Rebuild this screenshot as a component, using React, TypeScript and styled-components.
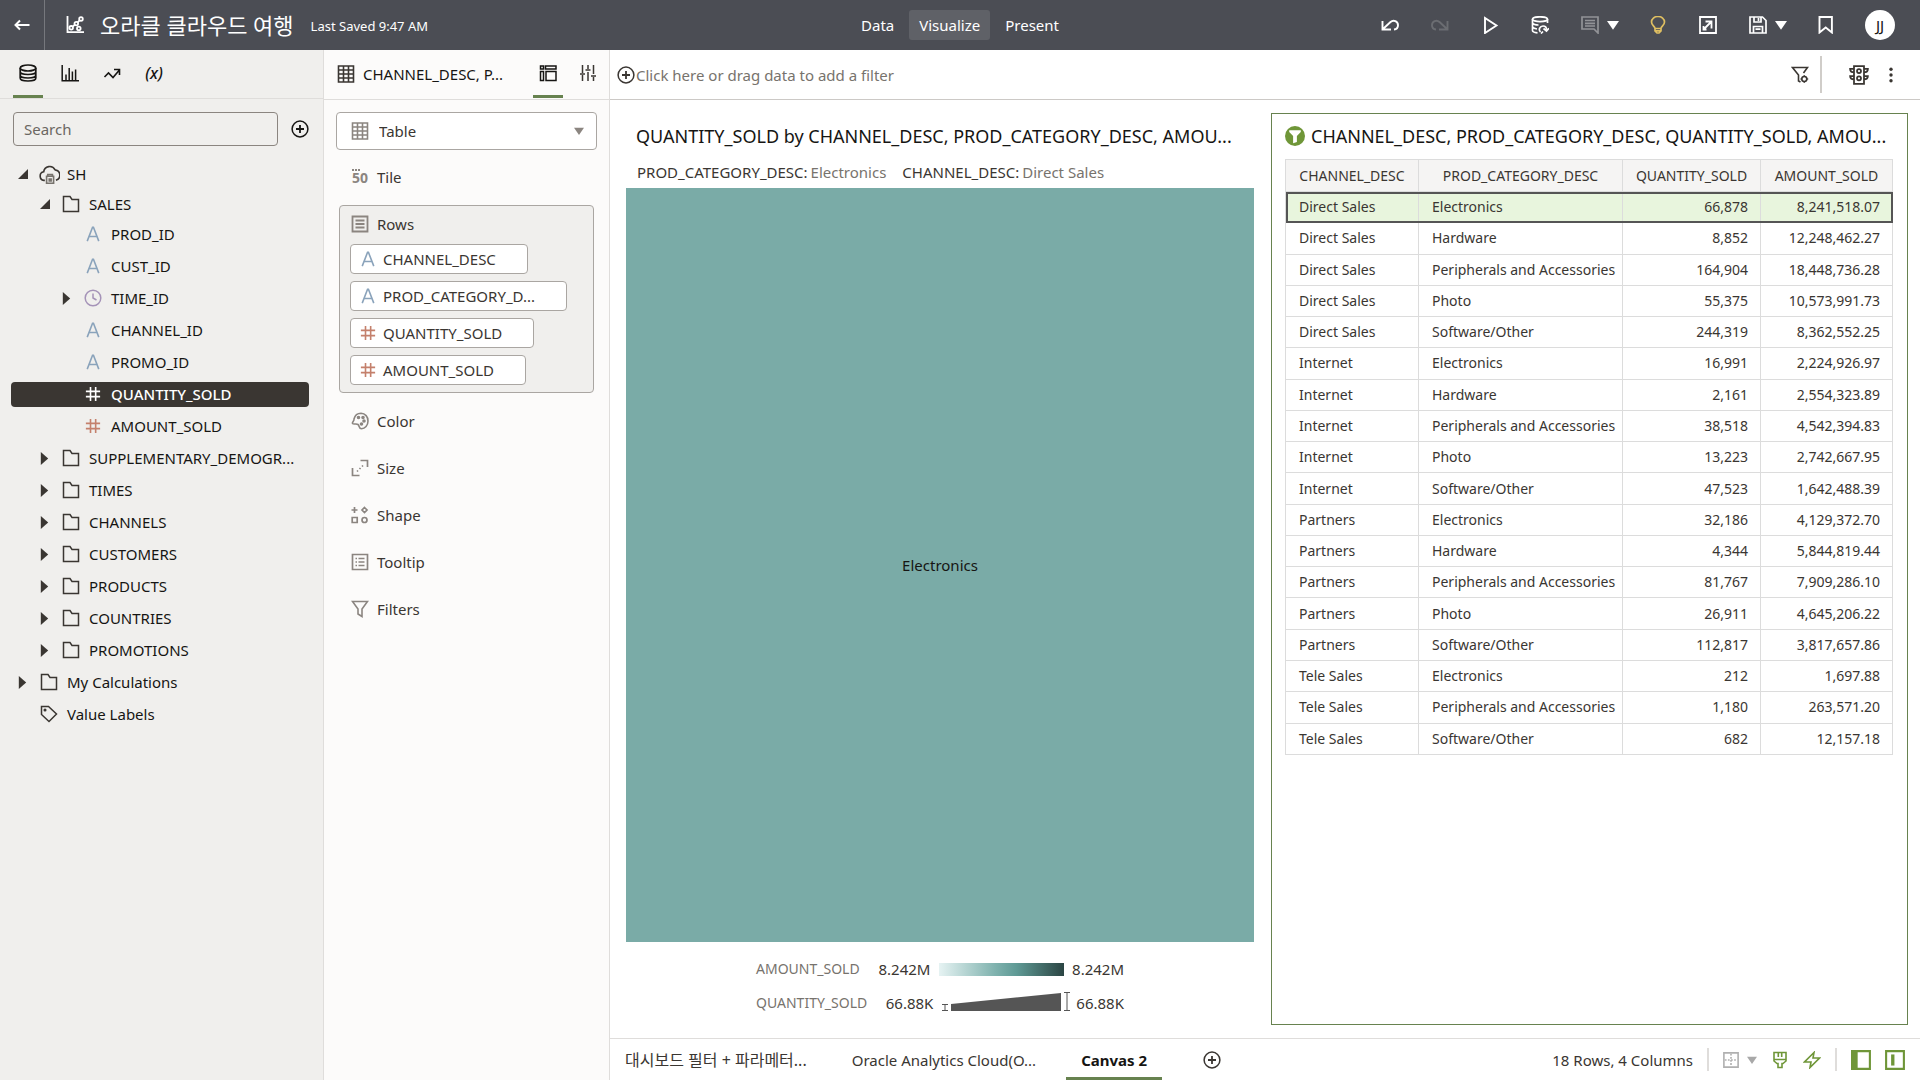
import React from "react";
import styled, { createGlobalStyle } from "styled-components";

const GlobalStyle = createGlobalStyle`
  *, *::before, *::after { box-sizing: border-box; }
  body {
    margin: 0;
    background: #fff;
    color: #161513;
    font: 15px/20px "Noto Sans", "Open Sans", "Noto Sans CJK KR", sans-serif;
  }
  button, input, select {
    font: inherit;
    color: inherit;
    margin: 0;
    padding: 0;
    border: 0;
    background: none;
  }
  button { cursor: pointer; }
  h1, h2, p, ul { margin: 0; padding: 0; font-weight: 400; list-style: none; }
`;

const green = "#67824f";
const bright = "#6f9638";
const muted = "#8b8580";
const ink = "#3a3632";

/* ---------- icons ---------- */

const Svg = styled.svg<{ $w?: number; $h?: number; $color?: string }>`
  display: block;
  flex: none;
  width: ${(p) => p.$w ?? 18}px;
  height: ${(p) => p.$h ?? p.$w ?? 18}px;
  color: ${(p) => p.$color ?? "inherit"};
  fill: none;
  stroke: currentColor;
  stroke-width: 1.5;
`;

const shapes: Record<string, React.ReactNode> = {
  back: <path d="M16.500 9H2M7 4.500 2.500 9 7 13.500" strokeWidth="2" />,
  project: (
    <g strokeWidth="1.800">
      <path d="M1.500 0v16.200H18" />
      <circle cx="5.200" cy="11.800" r="1.800" />
      <circle cx="10.300" cy="7.600" r="1.800" />
      <circle cx="12.800" cy="12.400" r="1.800" />
      <circle cx="15" cy="3" r="1.800" />
      <path d="m11.600 6.300 2-2M6.600 10.600l2.300-1.800" />
    </g>
  ),
  undo: <path d="M1.500 5v8.500H10M2 13l7.500-7C12.500 3.300 17 5.200 17 9.200c0 2.300-1.500 4-4 4.300" strokeWidth="1.900" />,
  redo: <path d="M16.500 5v8.500H8M16 13 8.500 6C5.500 3.300 1 5.200 1 9.200c0 2.300 1.500 4 4 4.300" strokeWidth="1.900" />,
  play: <path d="M4 2v15l11.500-7.500z" strokeWidth="1.900" />,
  refresh: (
    <g strokeWidth="1.700">
      <ellipse cx="9" cy="3.200" rx="7.500" ry="2.400" />
      <path d="M1.500 3v11.500c0 1 2 2 5 2.300M16.500 3v4M1.500 7c1 1.500 3 2 6 2M1.500 11c.8 1 2.500 1.700 4.500 2" />
      <path d="M9.500 16c-2.500-2.500-.5-6 2.500-6 2.200 0 3.500 1.500 3.500 3.500M12.500 12.500l3 2.500 2.500-2.800M12 15.500l-2 2" />
    </g>
  ),
  comment: <path d="M1 1h16v16l-4-4H1zM4 4.500h10M4 7.300h10M4 10h10" strokeWidth="1.700" />,
  bulb: (
    <path d="M6 12.500C6 10.500 2.500 9.500 2.500 6a6.500 5.500 0 0 1 13 0c0 3.500-3.500 4.500-3.500 6.500zM6 12.500v2.500l2 2h2l2-2v-2.500M6 14.800h6" strokeWidth="1.700" />
  ),
  exportIcon: <path d="M1 1h16v16H1zM4.500 13.500l7-7M6.500 5.500H12.500v7M4.500 10v3.500h3" strokeWidth="1.800" />,
  save: <path d="M1 1h12.500L17 4.500V17H1zM5 1v5h7V1M9.500 2v3M4.500 17v-6.500h9V17M6.500 13.200h5" strokeWidth="1.700" />,
  bookmark: <path d="M2.500 1h12.400v15.500L8.700 11.500l-6.200 5z" strokeWidth="1.900" />,
  database: (
    <g strokeWidth="1.700">
      <ellipse cx="9" cy="4" rx="7.800" ry="3" />
      <path d="M1.200 4v10c0 4 15.600 4 15.600 0V4M1.200 7.500c0 4 15.600 4 15.600 0M1.200 11c0 4 15.600 4 15.600 0" />
    </g>
  ),
  bars: <path d="M1.200 1v15.800H18M5 16V10.500M8.200 16V4M11.400 16V7.500M14.600 16V5.500" strokeWidth="1.500" />,
  trend: <path d="m1.500 13 4-4 4.500 4.500L16 6.500M11 5.500h5.500V11" strokeWidth="1.600" />,
  plus: (
    <g strokeWidth="1.500">
      <circle cx="9" cy="9" r="7.900" />
      <path d="M9 5v8M5 9h8" strokeWidth="1.800" />
    </g>
  ),
  grid: <path d="M1.500 1h15v16h-15zM6.500 1v16M11.500 1v16M1.500 5h15M1.500 9h15M1.500 13h15" strokeWidth="1.600" />,
  layout: <path d="M1.500 2h3v3h-3zM6.500 2h10.500v3H6.500zM1.500 7.500h3v9h-3zM7 7.500h10v9H7z" strokeWidth="1.500" />,
  sliders: <path d="M3.500 1v8M3.500 11v6M1 10h5M9 1v4M9 8v9M6.500 6h5M14.500 1v9M14.500 13v4M12 12h5" strokeWidth="1.500" />,
  cloud: (
    <g strokeWidth="1.400">
      <path d="M5 14H4.200A3.700 3.700 0 0 1 4 6.700 5.200 5.200 0 0 1 13.800 5 4.600 4.600 0 0 1 14.500 14" />
      <path d="M6.500 10.500h6v6h-6zM7.500 10.500V9h4v1.500M8.800 13h1.600v1.500H8.800z" stroke="#77736d" />
    </g>
  ),
  folder: <path d="M1.500 1.500H8l2 3h6.500v12h-15z" strokeWidth="1.500" />,
  attribute: <path d="M2.500 17 8.500 1.500h1L15.500 17M4.500 11.800h9" strokeWidth="1.800" />,
  measure: <path d="M6.200 1v16M12 1v16M1 6h16M1 12h16" strokeWidth="1.800" />,
  clock: (
    <g strokeWidth="1.500">
      <circle cx="9" cy="9" r="7.800" />
      <path d="M9 4.500V9l3.500 2" />
    </g>
  ),
  tag: (
    <g strokeWidth="1.500">
      <path d="M1.500 1.500h7l8 7.500-7.500 7.500-7.500-7z" />
      <circle cx="5" cy="5" r=".8" />
    </g>
  ),
  rows: <path d="M1.500 1.500h15v15h-15zM4.500 5.500h9M4.500 9h9M4.500 12.500h9" strokeWidth="1.800" />,
  tooltip: <path d="M1.500 1.500h15v15h-15zM4.500 5.500H6M7.500 5.500h6M4.500 9H6M7.500 9h6M4.500 12.500H6M7.500 12.500h6" strokeWidth="1.700" />,
  palette: (
    <g strokeWidth="1.600">
      <path d="M3 7C4 3 7 1.200 10 1.200a7.400 7.400 0 0 1 7 7.800c0 4.500-3 7.800-6.500 7.800-3 0-1.800-3-3.500-4.300C5 11 3 13 1.500 11.500.800 10 3.500 9 3 7z" />
      <circle cx="7.500" cy="5.500" r="1" fill="currentColor" />
      <circle cx="12" cy="5.500" r="1" fill="currentColor" />
      <circle cx="10.500" cy="12" r="1" fill="currentColor" />
      <circle cx="13" cy="9" r="1" fill="currentColor" />
    </g>
  ),
  size: <path d="M9.500 1.500h7V8M1.500 9v7.500h7M6 12.500l1-1M8.500 10l1-1M11 7.500l1-1" strokeWidth="1.700" />,
  shape: (
    <g strokeWidth="1.700">
      <path d="M3.500 1v6M.5 4h6M1.200 11.500h5v5h-5zM13.500 1.500 16 4l-2.500 2.500L11 4z" />
      <circle cx="13.500" cy="14" r="2.500" />
    </g>
  ),
  funnel: <path d="M1.500 1.500h15L11 9v7.500L7 14V9z" strokeWidth="1.600" />,
  funnelGear: (
    <g strokeWidth="1.600">
      <path d="M7.500 15.500V9L1.500 1.500h15L12.500 7M7.500 15l2 1" />
      <circle cx="13.300" cy="13" r="2.500" />
      <path d="M13.300 9.200v1M13.300 15.800v1M9.500 13h1M16.200 13h1" />
    </g>
  ),
  traffic: (
    <g strokeWidth="1.600">
      <path d="M4.500 1h9v16h-9zM4.500 3.500H1c0 2 1.500 3 3.500 3M4.500 10H1c0 2 1.500 3 3.500 3M13.500 3.500H17c0 2-1.500 3-3.500 3M13.500 10H17c0 2-1.500 3-3.500 3" />
      <circle cx="9" cy="5.500" r="1.800" />
      <circle cx="9" cy="12" r="1.800" />
    </g>
  ),
  kebab: (
    <g fill="currentColor" stroke="none">
      <circle cx="9" cy="2.500" r="1.900" />
      <circle cx="9" cy="9" r="1.900" />
      <circle cx="9" cy="15.500" r="1.900" />
    </g>
  ),
  filterBadge: (
    <g stroke="none">
      <circle cx="9" cy="9" r="9" fill={bright} />
      <path d="M3.800 3.800h10.400v1.500L10.700 9v5.500L7.300 15.500V9L3.800 5.300z" fill="#fff" />
    </g>
  ),
  caretDown: <path d="M0 3h18L9 16z" fill="currentColor" stroke="none" />,
  caretRight: <path d="M3 0v18l12-9z" fill="currentColor" stroke="none" />,
  caretOpen: <path d="M18 0v18H0z" fill="currentColor" stroke="none" />,
  dashedGrid: (
    <g strokeWidth="1.800">
      <path d="M1 1h16v16H1z" />
      <path d="M9 2v14M2 9h14" strokeDasharray="2 1.500" />
    </g>
  ),
  brush: <path d="M3 1.500h12v8.500L12 12.500H11v4H7v-4H6L3 10zM3 8.500h12M7.300 1.500V6M10.700 1.500V6" strokeWidth="1.600" />,
  bolt: <path d="M11 1.500 1.500 11H8l-1 5.500L16.500 7H10z" strokeWidth="1.600" />,
  leftPanel: (
    <g>
      <path d="M1 1h16v16H1z" strokeWidth="1.900" />
      <path d="M0 0h6v18H0z" fill="currentColor" stroke="none" />
    </g>
  ),
  innerPanel: (
    <g>
      <path d="M1 1h16v16H1z" strokeWidth="1.900" />
      <path d="M5.500 4h3v10h-3z" fill="currentColor" stroke="none" />
    </g>
  ),
};

function Icon({ name, w, h, color }: { name: string; w?: number; h?: number; color?: string }) {
  return (
    <Svg viewBox="0 0 18 18" $w={w} $h={h} $color={color} preserveAspectRatio="none" aria-hidden="true">
      {shapes[name]}
    </Svg>
  );
}

/* ---------- frame ---------- */

const Page = styled.div`
  display: grid;
  grid-template-rows: auto 1fr;
  min-height: 100vh;
`;

const Header = styled.header`
  display: grid;
  grid-template-columns: 1fr auto 1fr;
  align-items: center;
  height: 50px;
  background: #4b4d54;
  color: #fff;
`;

const HeaderStart = styled.div`
  display: flex;
  align-items: center;
  height: 50px;
`;

const BackButton = styled.button`
  display: grid;
  place-items: center;
  width: 45px;
  height: 50px;
  border-right: 1px solid #76787d;
  margin-right: 21px;
`;

const Title = styled.h1`
  margin: 0 17px 0 16px;
  font-size: 22px;
  line-height: 30px;
`;

const Saved = styled.span`
  padding-top: 2px;
  font-size: 13px;
  line-height: 20px;
`;

const Modes = styled.nav`
  display: flex;
  gap: 5px;
`;

const ModeButton = styled.button<{ $active?: boolean }>`
  height: 30px;
  padding: 0 10px;
  border-radius: 3px;
  background: ${(p) => (p.$active ? "#5f6167" : "transparent")};
`;

const HeaderEnd = styled.div`
  display: flex;
  justify-content: flex-end;
  align-items: center;
  padding-right: 25px;
`;

const ToolButton = styled.button`
  display: grid;
  place-items: center;
  width: 50px;
  height: 40px;
`;

const SplitButton = styled.button`
  display: flex;
  align-items: center;
  gap: 8px;
  width: 68px;
  height: 40px;
  padding-left: 16px;
`;

const Avatar = styled.button`
  width: 30px;
  height: 30px;
  margin-left: 14px;
  border-radius: 50%;
  background: #fff;
  color: #161513;
`;

const Body = styled.div`
  display: grid;
  grid-template-columns: 324px 286px minmax(0, 1fr);
`;

/* ---------- data panel ---------- */

const DataPanel = styled.aside`
  background: #f0efed;
  border-right: 1px solid #dfdddb;
`;

const PanelTabs = styled.div`
  display: flex;
  gap: 12px;
  height: 49px;
  padding-left: 13px;
  border-bottom: 1px solid #dfdddb;
`;

const PanelTab = styled.button<{ $active?: boolean }>`
  display: grid;
  place-items: center;
  width: 30px;
  height: 48px;
  border-bottom: 3px solid ${(p) => (p.$active ? green : "transparent")};
`;

const Formula = styled.em`
  font-size: 16px;
  line-height: 20px;
  font-weight: 500;
`;

const SearchRow = styled.div`
  display: flex;
  align-items: center;
  gap: 13px;
  padding: 13px 14px 13px 13px;
`;

const SearchInput = styled.input`
  flex: 1;
  min-width: 0;
  height: 34px;
  padding: 0 10px;
  border: 1px solid #8b8580;
  border-radius: 4px;
  &::placeholder { color: #6b6762; opacity: 1; }
`;

const IconButton = styled.button`
  display: grid;
  place-items: center;
  flex: none;
`;

const Tree = styled.ul`
  padding: 0 14px 0 11px;
`;

const TreeRow = styled.li`
  display: flex;
  align-items: center;
  height: 32px;
  &:nth-child(1) { height: 30px; }
  &:nth-child(2) { height: 29px; }
`;

const TreeItem = styled.button<{ $level: number; $selected?: boolean }>`
  display: flex;
  align-items: center;
  width: 100%;
  height: 25px;
  padding-left: ${(p) => p.$level * 22}px;
  border-radius: 4px;
  white-space: nowrap;
  background: ${(p) => (p.$selected ? ink : "transparent")};
  color: ${(p) => (p.$selected ? "#fff" : "#161513")};
  font-weight: ${(p) => (p.$selected ? 500 : 400)};
`;

const Slot = styled.span<{ $w: number; $color?: string }>`
  display: grid;
  place-items: center;
  flex: none;
  width: ${(p) => p.$w}px;
  color: ${(p) => p.$color ?? ink};
`;

const TreeLabel = styled.span`
  margin-left: 3px;
`;

type Node = [number, "open" | "closed" | "none", string, string, boolean?];

const tree: Node[] = [
  [0, "open", "cloud", "SH"],
  [1, "open", "folder", "SALES"],
  [2, "none", "attribute", "PROD_ID"],
  [2, "none", "attribute", "CUST_ID"],
  [2, "closed", "clock", "TIME_ID"],
  [2, "none", "attribute", "CHANNEL_ID"],
  [2, "none", "attribute", "PROMO_ID"],
  [2, "none", "measure", "QUANTITY_SOLD", true],
  [2, "none", "measure", "AMOUNT_SOLD"],
  [1, "closed", "folder", "SUPPLEMENTARY_DEMOGR..."],
  [1, "closed", "folder", "TIMES"],
  [1, "closed", "folder", "CHANNELS"],
  [1, "closed", "folder", "CUSTOMERS"],
  [1, "closed", "folder", "PRODUCTS"],
  [1, "closed", "folder", "COUNTRIES"],
  [1, "closed", "folder", "PROMOTIONS"],
  [0, "closed", "folder", "My Calculations"],
  [0, "none", "tag", "Value Labels"],
];

const iconColor: Record<string, string> = {
  attribute: "#8aa3bb",
  measure: "#c4806c",
  clock: "#a593b8",
};

const iconSize: Record<string, number> = { cloud: 21, attribute: 16, measure: 16 };

/* ---------- grammar panel ---------- */

const GrammarPanel = styled.aside`
  background: #fcfbfa;
  border-right: 1px solid #dfdddb;
`;

const GrammarHeader = styled.div`
  display: flex;
  align-items: center;
  height: 50px;
  padding: 0 6px 2px 13px;
  border-bottom: 1px solid #dfdddb;
`;

const GrammarTitle = styled.h2`
  flex: 1;
  margin-left: 8px;
  font-size: 15px;
  line-height: 20px;
  white-space: nowrap;
`;

const GrammarTab = styled(PanelTab)`
  align-self: flex-start;
  & + & { margin-left: 10px; }
`;

const TypeBox = styled.label`
  display: flex;
  align-items: center;
  height: 38px;
  margin: 12px 12px 0;
  padding: 0 12px 0 14px;
  border: 1px solid #aaa6a2;
  border-radius: 4px;
  background: #fff;
  color: ${ink};
`;

const TypeSelect = styled.select`
  flex: 1;
  height: 36px;
  padding-left: 10px;
  appearance: none;
  outline: none;
`;

const EdgeList = styled.div`
  display: flex;
  flex-direction: column;
`;

const Edge = styled.div<{ $tile?: boolean }>`
  display: flex;
  align-items: center;
  gap: 8px;
  height: ${(p) => (p.$tile ? 53 : 47)}px;
  padding-left: 27px;
  color: ${ink};
`;

const TileGlyph = styled.span`
  width: 18px;
  color: ${muted};
  font-size: 14px;
  line-height: 14px;
  font-weight: 700;
  text-align: center;
  &::before {
    content: "";
    display: block;
    width: 8px;
    margin-left: 1px;
    border-top: 2px dotted ${muted};
  }
`;

const RowsBox = styled.section`
  display: flex;
  flex-direction: column;
  align-items: flex-start;
  gap: 7px;
  margin: 2px 15px 4px;
  padding: 8px 10px 7px;
  border: 1px solid #aaa6a2;
  border-radius: 4px;
  background: #f0efed;
`;

const RowsTitle = styled.h2`
  display: flex;
  align-items: center;
  gap: 8px;
  height: 20px;
  margin-bottom: 3px;
  padding-left: 1px;
  font-size: 15px;
  line-height: 20px;
  color: ${ink};
`;

const Chip = styled.button`
  display: flex;
  align-items: center;
  gap: 7px;
  height: 30px;
  padding: 0 31px 0 9px;
  border: 1px solid #aaa6a2;
  border-radius: 4px;
  background: #fff;
  color: ${ink};
  white-space: nowrap;
`;

/* ---------- canvas ---------- */

const Main = styled.main`
  display: grid;
  grid-template-rows: 50px 1fr 42px;
`;

const FilterBar = styled.div`
  display: flex;
  align-items: center;
  border-bottom: 1px solid #ccc9c6;
  padding: 0 21px 0 7px;
  color: ${ink};
`;

const AddFilter = styled.button`
  display: flex;
  align-items: center;
  gap: 1px;
  margin-right: auto;
`;

const AddFilterText = styled.span`
  color: #77736d;
`;

const BarRule = styled.span`
  width: 2px;
  height: 37px;
  margin: 0 27px 0 11px;
  background: #d0cdc9;
`;

const KebabButton = styled(IconButton)`
  margin-left: 14px;
`;

const Canvas = styled.div`
  display: grid;
  grid-template-columns: minmax(0, 628fr) minmax(0, 637fr);
  gap: 17px;
  padding: 13px 12px 13px 16px;
`;

const Viz = styled.section<{ $selected?: boolean }>`
  display: flex;
  flex-direction: column;
  border: ${(p) => (p.$selected ? `1px solid ${green}` : "0")};
  padding: ${(p) => (p.$selected ? "10px 14px 10px 13px" : "11px 0 5px")};
`;

const VizTitle = styled.h2`
  display: flex;
  align-items: center;
  gap: 6px;
  font-size: 18px;
  line-height: 24px;
  white-space: nowrap;
`;

const TreemapHead = styled.div`
  padding: 0 10px;
`;

const Scope = styled.p`
  display: flex;
  gap: 16px;
  margin: 14px 0 6px 1px;
  color: ${ink};
`;

const ScopeValue = styled.span`
  margin-left: 3px;
  color: #77736d;
`;

const Treemap = styled.div`
  flex: 1;
  display: grid;
  place-items: center;
  background: #7aaba7;
`;

const Legend = styled.div`
  align-self: center;
  width: 368px;
  padding-top: 10px;
  font-size: 14px;
`;

const LegendRow = styled.div`
  display: flex;
  align-items: center;
  height: 34px;
`;

const LegendName = styled.span`
  width: 119px;
  color: #77736d;
`;

const LegendValue = styled.span<{ $w?: number; $gap?: number }>`
  width: ${(p) => (p.$w ? `${p.$w}px` : "auto")};
  margin: 0 ${(p) => (p.$w ? 9 : 0)}px 0 ${(p) => p.$gap ?? 0}px;
  text-align: right;
  color: ${ink};
  font-size: 15px;
`;

const Ramp = styled.span`
  width: 125px;
  height: 13px;
  background: linear-gradient(90deg, #e6f3f3, #7fb2ae 45%, #5f9a95 62%, #2b4543);
`;

const Grid = styled.table`
  width: 100%;
  height: 596px;
  margin-top: 11px;
  table-layout: fixed;
  border-collapse: collapse;
  border: 1px solid #dcdcdc;
  font-size: 14px;
  line-height: 20px;
  color: ${ink};
  white-space: nowrap;
`;

const Col = styled.col<{ $w?: number }>`
  width: ${(p) => (p.$w ? `${p.$w}px` : "auto")};
`;

const HeadCell = styled.th`
  height: 32px;
  padding: 0;
  border: 1px solid #dcdcdc;
  background: #f5f4f3;
  font-weight: 400;
  text-align: center;
`;

const DataRow = styled.tr<{ $selected?: boolean }>`
  background: ${(p) => (p.$selected ? "#e8f5dd" : "transparent")};
  outline: ${(p) => (p.$selected ? "2px solid #555" : "none")};
  outline-offset: -2px;
`;

const Cell = styled.td<{ $num?: boolean }>`
  padding: 0 12px 0 13px;
  border: 1px solid #dcdcdc;
  text-align: ${(p) => (p.$num ? "right" : "left")};
`;

const data: [string, string, string, string][] = [
  ["Direct Sales", "Electronics", "66,878", "8,241,518.07"],
  ["Direct Sales", "Hardware", "8,852", "12,248,462.27"],
  ["Direct Sales", "Peripherals and Accessories", "164,904", "18,448,736.28"],
  ["Direct Sales", "Photo", "55,375", "10,573,991.73"],
  ["Direct Sales", "Software/Other", "244,319", "8,362,552.25"],
  ["Internet", "Electronics", "16,991", "2,224,926.97"],
  ["Internet", "Hardware", "2,161", "2,554,323.89"],
  ["Internet", "Peripherals and Accessories", "38,518", "4,542,394.83"],
  ["Internet", "Photo", "13,223", "2,742,667.95"],
  ["Internet", "Software/Other", "47,523", "1,642,488.39"],
  ["Partners", "Electronics", "32,186", "4,129,372.70"],
  ["Partners", "Hardware", "4,344", "5,844,819.44"],
  ["Partners", "Peripherals and Accessories", "81,767", "7,909,286.10"],
  ["Partners", "Photo", "26,911", "4,645,206.22"],
  ["Partners", "Software/Other", "112,817", "3,817,657.86"],
  ["Tele Sales", "Electronics", "212", "1,697.88"],
  ["Tele Sales", "Peripherals and Accessories", "1,180", "263,571.20"],
  ["Tele Sales", "Software/Other", "682", "12,157.18"],
];

/* ---------- footer ---------- */

const Footer = styled.footer`
  display: flex;
  align-items: stretch;
  border-top: 1px solid #dfdddb;
  padding-right: 15px;
`;

const CanvasTab = styled.button<{ $active?: boolean; $large?: boolean }>`
  height: 41px;
  padding: 3px 15px 0;
  margin-right: 15px;
  border-bottom: 3px solid ${(p) => (p.$active ? green : "transparent")};
  font-size: ${(p) => (p.$large ? 16 : 15)}px;
  font-weight: ${(p) => (p.$active ? 700 : 400)};
  color: ${(p) => (p.$active ? "#161513" : ink)};
  white-space: nowrap;
`;

const AddCanvas = styled(IconButton)`
  margin: 0 auto 0 26px;
`;

const Status = styled.div`
  display: flex;
  align-items: center;
  gap: 14px;
  color: ${ink};
`;

const StatusRule = styled.span`
  width: 2px;
  height: 23px;
  background: #dfdddb;
`;

const StatusSplit = styled.button`
  display: flex;
  align-items: center;
  gap: 8px;
`;

export default function App() {
  return (
    <>
      <GlobalStyle />
      <Page>
        <Header>
          <HeaderStart>
            <BackButton aria-label="Back"><Icon name="back" /></BackButton>
            <Icon name="project" />
            <Title>오라클 클라우드 여행</Title>
            <Saved>Last Saved 9:47 AM</Saved>
          </HeaderStart>
          <Modes>
            <ModeButton>Data</ModeButton>
            <ModeButton $active>Visualize</ModeButton>
            <ModeButton>Present</ModeButton>
          </Modes>
          <HeaderEnd>
            <ToolButton aria-label="Undo"><Icon name="undo" /></ToolButton>
            <ToolButton aria-label="Redo"><Icon name="redo" color="#6b6d72" /></ToolButton>
            <ToolButton aria-label="Preview"><Icon name="play" /></ToolButton>
            <ToolButton aria-label="Refresh data"><Icon name="refresh" /></ToolButton>
            <SplitButton aria-label="Notes">
              <Icon name="comment" color="#929397" />
              <Icon name="caretDown" w={12} />
            </SplitButton>
            <ToolButton aria-label="Insights"><Icon name="bulb" color="#dfbf62" /></ToolButton>
            <ToolButton aria-label="Export"><Icon name="exportIcon" /></ToolButton>
            <SplitButton aria-label="Save">
              <Icon name="save" />
              <Icon name="caretDown" w={12} />
            </SplitButton>
            <ToolButton aria-label="Bookmark"><Icon name="bookmark" /></ToolButton>
            <Avatar>JJ</Avatar>
          </HeaderEnd>
        </Header>

        <Body>
          <DataPanel>
            <PanelTabs>
              <PanelTab $active aria-label="Data"><Icon name="database" /></PanelTab>
              <PanelTab aria-label="Visualizations"><Icon name="bars" /></PanelTab>
              <PanelTab aria-label="Analytics"><Icon name="trend" /></PanelTab>
              <PanelTab><Formula>(x)</Formula></PanelTab>
            </PanelTabs>
            <SearchRow>
              <SearchInput type="text" placeholder="Search" aria-label="Search" />
              <IconButton aria-label="Add data"><Icon name="plus" /></IconButton>
            </SearchRow>
            <Tree>
              {tree.map(([level, state, icon, label, selected]) => (
                <TreeRow key={label}>
                  <TreeItem $level={level} $selected={selected}>
                    <Slot $w={23}>
                      {state === "open" && <Icon name="caretOpen" w={10} />}
                      {state === "closed" && <Icon name="caretRight" w={11} h={13} />}
                    </Slot>
                    <Slot $w={30} $color={selected ? "#fff" : iconColor[icon]}>
                      <Icon name={icon} w={iconSize[icon]} />
                    </Slot>
                    <TreeLabel>{label}</TreeLabel>
                  </TreeItem>
                </TreeRow>
              ))}
            </Tree>
          </DataPanel>

          <GrammarPanel>
            <GrammarHeader>
              <Icon name="grid" color={ink} />
              <GrammarTitle>CHANNEL_DESC, P...</GrammarTitle>
              <GrammarTab $active aria-label="Grammar"><Icon name="layout" /></GrammarTab>
              <GrammarTab aria-label="Properties"><Icon name="sliders" color={ink} /></GrammarTab>
            </GrammarHeader>
            <TypeBox>
              <Icon name="grid" color={muted} />
              <TypeSelect aria-label="Visualization type" defaultValue="Table">
                <option>Table</option>
              </TypeSelect>
              <Icon name="caretDown" w={10} color={muted} />
            </TypeBox>
            <EdgeList>
              <Edge $tile><TileGlyph>50</TileGlyph>Tile</Edge>
              <RowsBox>
                <RowsTitle><Icon name="rows" color={muted} />Rows</RowsTitle>
                <Chip><Icon name="attribute" w={16} color={iconColor.attribute} />CHANNEL_DESC</Chip>
                <Chip><Icon name="attribute" w={16} color={iconColor.attribute} />PROD_CATEGORY_D...</Chip>
                <Chip><Icon name="measure" w={16} color={iconColor.measure} />QUANTITY_SOLD</Chip>
                <Chip><Icon name="measure" w={16} color={iconColor.measure} />AMOUNT_SOLD</Chip>
              </RowsBox>
              <Edge><Icon name="palette" color={muted} />Color</Edge>
              <Edge><Icon name="size" color={muted} />Size</Edge>
              <Edge><Icon name="shape" color={muted} />Shape</Edge>
              <Edge><Icon name="tooltip" color={muted} />Tooltip</Edge>
              <Edge><Icon name="funnel" color={muted} />Filters</Edge>
            </EdgeList>
          </GrammarPanel>

          <Main>
            <FilterBar>
              <AddFilter>
                <Icon name="plus" />
                <AddFilterText>Click here or drag data to add a filter</AddFilterText>
              </AddFilter>
              <IconButton aria-label="Filter settings"><Icon name="funnelGear" /></IconButton>
              <BarRule />
              <IconButton aria-label="Auto apply"><Icon name="traffic" w={20} /></IconButton>
              <KebabButton aria-label="More"><Icon name="kebab" w={16} /></KebabButton>
            </FilterBar>

            <Canvas>
              <Viz>
                <TreemapHead>
                  <VizTitle>QUANTITY_SOLD by CHANNEL_DESC, PROD_CATEGORY_DESC, AMOU...</VizTitle>
                  <Scope>
                    <span>PROD_CATEGORY_DESC:<ScopeValue>Electronics</ScopeValue></span>
                    <span>CHANNEL_DESC:<ScopeValue>Direct Sales</ScopeValue></span>
                  </Scope>
                </TreemapHead>
                <Treemap>Electronics</Treemap>
                <Legend>
                  <LegendRow>
                    <LegendName>AMOUNT_SOLD</LegendName>
                    <LegendValue $w={56}>8.242M</LegendValue>
                    <Ramp />
                    <LegendValue $gap={8}>8.242M</LegendValue>
                  </LegendRow>
                  <LegendRow>
                    <LegendName>QUANTITY_SOLD</LegendName>
                    <LegendValue $w={61}>66.88K</LegendValue>
                    <Svg viewBox="0 0 128 24" $w={128} $h={24} $color="#555">
                      <path d="M0 13.500h6M3 13.500v6M0 19.500h6M122 1.500h6M125 1.500v18M122 19.500h6" strokeWidth="1" />
                      <path d="M9 13 119 2v18H9z" fill="currentColor" stroke="none" />
                    </Svg>
                    <LegendValue $gap={6}>66.88K</LegendValue>
                  </LegendRow>
                </Legend>
              </Viz>

              <Viz $selected>
                <VizTitle>
                  <Icon name="filterBadge" w={20} />
                  CHANNEL_DESC, PROD_CATEGORY_DESC, QUANTITY_SOLD, AMOU...
                </VizTitle>
                <Grid>
                  <colgroup>
                    <Col $w={133} />
                    <Col $w={204} />
                    <Col $w={138} />
                    <Col />
                  </colgroup>
                  <thead>
                    <tr>
                      <HeadCell>CHANNEL_DESC</HeadCell>
                      <HeadCell>PROD_CATEGORY_DESC</HeadCell>
                      <HeadCell>QUANTITY_SOLD</HeadCell>
                      <HeadCell>AMOUNT_SOLD</HeadCell>
                    </tr>
                  </thead>
                  <tbody>
                    {data.map(([channel, category, quantity, amount], i) => (
                      <DataRow key={channel + category} $selected={i === 0}>
                        <Cell>{channel}</Cell>
                        <Cell>{category}</Cell>
                        <Cell $num>{quantity}</Cell>
                        <Cell $num>{amount}</Cell>
                      </DataRow>
                    ))}
                  </tbody>
                </Grid>
              </Viz>
            </Canvas>

            <Footer>
              <CanvasTab $large>대시보드 필터 + 파라메터...</CanvasTab>
              <CanvasTab>Oracle Analytics Cloud(O...</CanvasTab>
              <CanvasTab $active>Canvas 2</CanvasTab>
              <AddCanvas aria-label="Add canvas"><Icon name="plus" color={ink} /></AddCanvas>
              <Status>
                <span>18 Rows, 4 Columns</span>
                <StatusRule />
                <StatusSplit aria-label="Grid">
                  <Icon name="dashedGrid" w={16} color="#b0b0b0" />
                  <Icon name="caretDown" w={10} color="#a8a8a8" />
                </StatusSplit>
                <IconButton aria-label="Brushing"><Icon name="brush" color={bright} /></IconButton>
                <IconButton aria-label="Auto refresh"><Icon name="bolt" color={bright} /></IconButton>
                <StatusRule />
                <IconButton aria-label="Data panel"><Icon name="leftPanel" w={20} color={bright} /></IconButton>
                <IconButton aria-label="Grammar panel"><Icon name="innerPanel" w={20} color={bright} /></IconButton>
              </Status>
            </Footer>
          </Main>
        </Body>
      </Page>
    </>
  );
}
